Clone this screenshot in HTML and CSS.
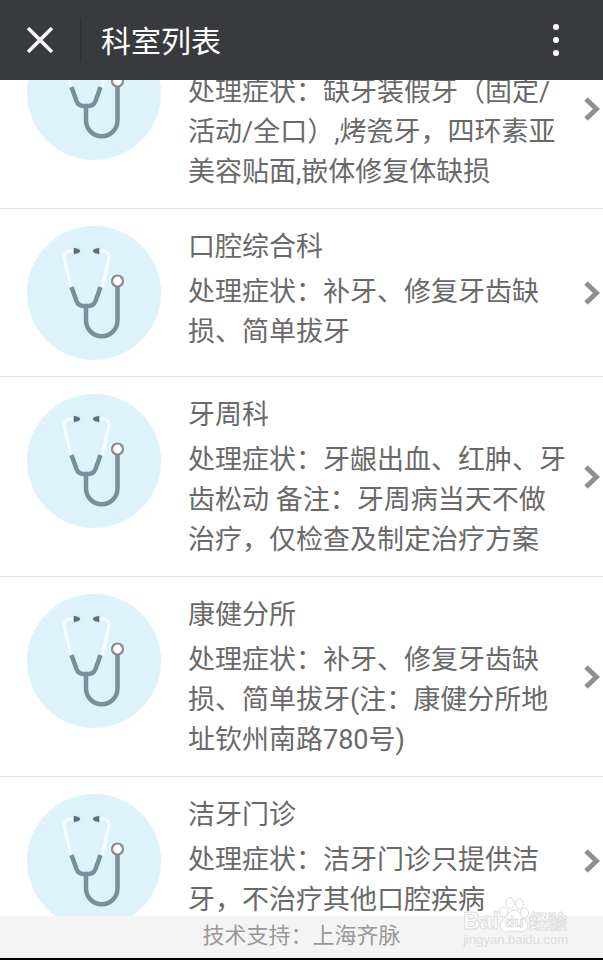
FILE: index.html
```html
<!DOCTYPE html>
<html lang="zh-CN">
<head>
<meta charset="utf-8">
<meta name="viewport" content="width=device-width, initial-scale=1">
<title>科室列表</title>
<link rel="stylesheet" href="styles.css">
</head>
<body>
<svg class="symbols" aria-hidden="true">
  <symbol id="stethoscope" viewBox="0 0 134 134">
    <circle cx="67" cy="67" r="67" fill="#def2fc"/>
    <g fill="none" stroke-linejoin="round">
      <path d="M48 25h-4q-8 0-6.500 8l6.500 29M71 25h4q8 0 6.500 8l-6.500 29" stroke="#f8fdff" stroke-width="3"/>
      <path d="M44.500 61l5 14q2 5 7 5h5q5 0 7-5l5-14M59 80v14.500a15.750 15.750 0 0 0 31.500 0V60" stroke="#78909a" stroke-width="4.500"/>
      <circle cx="90.500" cy="55" r="5.500" fill="#fff" stroke="#868c90" stroke-width="2.200"/>
    </g>
    <path d="M47 22l5 1.500q2 1.500 0 3l-5 1.500zM72 22l-5 1.500q-2 1.500 0 3l5 1.500z" fill="#5a717b" stroke="#5a717b" stroke-width=".6"/>
  </symbol>
  <symbol id="chevron" viewBox="0 0 16 24">
    <path d="M2 2l10.500 10L2 22" fill="none" stroke="#8f8f8f" stroke-width="5"/>
  </symbol>
</svg>

<header class="topbar">
  <button class="close" type="button" aria-label="关闭">
    <svg class="close-icon" viewBox="0 0 26 26"><path d="M1 1l24 24M25 1L1 25" fill="none" stroke="#fff" stroke-width="3.500"/></svg>
  </button>
  <h1 class="topbar-title">科室列表</h1>
  <button class="more" type="button" aria-label="更多">
    <svg class="more-icon" viewBox="0 0 6 32"><g fill="#fff"><circle cx="3" cy="3" r="3"/><circle cx="3" cy="16" r="3"/><circle cx="3" cy="29" r="3"/></g></svg>
  </button>
</header>

<main class="content">
  <ul class="list">
    <li><a class="row row-scrolled" href="#">
      <svg class="avatar"><use href="#stethoscope"/></svg>
      <div class="info">
        <p class="desc">处理症状：缺牙装假牙（固定/活动/全口）,烤瓷牙，四环素亚美容贴面,嵌体修复体缺损</p>
      </div>
      <svg class="chevron"><use href="#chevron"/></svg>
    </a></li>
    <li><a class="row" href="#">
      <svg class="avatar"><use href="#stethoscope"/></svg>
      <div class="info">
        <h2 class="name">口腔综合科</h2>
        <p class="desc">处理症状：补牙、修复牙齿缺损、简单拔牙</p>
      </div>
      <svg class="chevron"><use href="#chevron"/></svg>
    </a></li>
    <li><a class="row" href="#">
      <svg class="avatar"><use href="#stethoscope"/></svg>
      <div class="info">
        <h2 class="name">牙周科</h2>
        <p class="desc">处理症状：牙龈出血、红肿、牙齿松动 备注：牙周病当天不做治疗，仅检查及制定治疗方案</p>
      </div>
      <svg class="chevron"><use href="#chevron"/></svg>
    </a></li>
    <li><a class="row" href="#">
      <svg class="avatar"><use href="#stethoscope"/></svg>
      <div class="info">
        <h2 class="name">康健分所</h2>
        <p class="desc">处理症状：补牙、修复牙齿缺损、简单拔牙(注：康健分所地址钦州南路780号)</p>
      </div>
      <svg class="chevron"><use href="#chevron"/></svg>
    </a></li>
    <li><a class="row" href="#">
      <svg class="avatar"><use href="#stethoscope"/></svg>
      <div class="info">
        <h2 class="name">洁牙门诊</h2>
        <p class="desc">处理症状：洁牙门诊只提供洁牙，不治疗其他口腔疾病</p>
      </div>
      <svg class="chevron"><use href="#chevron"/></svg>
    </a></li>
  </ul>
</main>

<footer class="support">
  <p class="support-text">技术支持：上海齐脉</p>
  <div class="watermark">
    <div class="brand">
      <span>Bai</span>
      <span class="paw">
        <svg class="paw-icon" viewBox="0 0 30 36">
          <g fill="#fff" stroke="#dcdcdc">
            <ellipse cx="4.500" cy="15" rx="4" ry="5"/>
            <ellipse cx="11" cy="6" rx="4" ry="5.500"/>
            <ellipse cx="20.500" cy="7" rx="4" ry="5.500"/>
            <ellipse cx="25.500" cy="16" rx="4" ry="5"/>
            <path d="M15 13c5 0 6 5 9 8 8 6 5 14-2 14-4-1-10-1-14 0-7 0-10-8-2-14 3-3 4-8 9-8z"/>
          </g>
        </svg>
        <span class="paw-text">du</span>
      </span>
      <span class="brand-cn">经验</span>
    </div>
    <div class="site">jingyan.baidu.com</div>
  </div>
</footer>
</body>
</html>
```

FILE: styles.css
```css
* {
  box-sizing: border-box;
}

body {
  margin: 0;
  height: 100vh;
  display: flex;
  flex-direction: column;
  overflow: hidden;
  background: #fff;
  color: #696969;
  font-family: Roboto, "Noto Sans CJK SC", sans-serif;
}

h1, h2, p, ul {
  margin: 0;
  padding: 0;
  font-weight: 400;
}

button {
  padding: 0;
  border: 0;
  background: none;
}

.symbols {
  position: absolute;
  width: 0;
  height: 0;
}

.topbar {
  flex: none;
  height: 80px;
  display: flex;
  align-items: center;
  background: #393a3e;
  color: #fff;
}

.close {
  width: 81px;
  height: 42px;
  display: flex;
  align-items: center;
  justify-content: center;
  border-right: 1px solid #2f3034;
}

.close-icon {
  width: 26px;
  height: 26px;
}

.topbar-title {
  flex: 1;
  padding: 4px 0 0 20px;
  font-size: 30px;
  line-height: 40px;
}

.more {
  width: 94px;
  height: 80px;
  display: flex;
  align-items: center;
  justify-content: center;
}

.more-icon {
  width: 6px;
  height: 32px;
}

.content {
  flex: 1;
  min-height: 0;
  overflow: hidden;
}

.list {
  list-style: none;
  margin-top: -71px;
}

.row {
  display: flex;
  align-items: flex-start;
  padding: 17px 3px 16px 27px;
  border-bottom: 1px solid #e0e0e0;
  color: inherit;
  text-decoration: none;
}

.avatar {
  flex: none;
  width: 134px;
  height: 134px;
  margin-right: 27px;
}

.info {
  flex: 1;
  padding-top: 1px;
  font-size: 27px;
  line-height: 40px;
}

.row-scrolled .info {
  padding-top: 46px;
}

.name {
  margin-bottom: 5px;
  font-size: 27px;
}

.chevron {
  flex: none;
  align-self: center;
  width: 16px;
  height: 24px;
  margin-left: 16px;
}

.support {
  flex: none;
  position: relative;
  height: 44px;
  border-bottom: 2px solid #000;
  background: #f4f4f4;
}

.support-text {
  font-size: 22px;
  line-height: 40px;
  text-align: center;
  color: #999;
}

.watermark {
  position: absolute;
  right: 35px;
  bottom: 11px;
  color: #fff;
  -webkit-text-stroke: 1px #dcdcdc;
}

.brand {
  display: flex;
  align-items: flex-end;
  font: 700 23px/24px "Liberation Sans", sans-serif;
}

.paw {
  position: relative;
  width: 30px;
  height: 36px;
}

.paw-icon {
  width: 30px;
  height: 36px;
}

.paw-text {
  position: absolute;
  left: 6px;
  bottom: 1px;
  font-size: 15px;
  line-height: 20px;
}

.brand-cn {
  font: 700 19px/24px "Noto Sans CJK SC", sans-serif;
}

.site {
  font: 13px/14px "Liberation Sans", sans-serif;
  color: #dcdcdc;
  -webkit-text-stroke: 0;
}
```
